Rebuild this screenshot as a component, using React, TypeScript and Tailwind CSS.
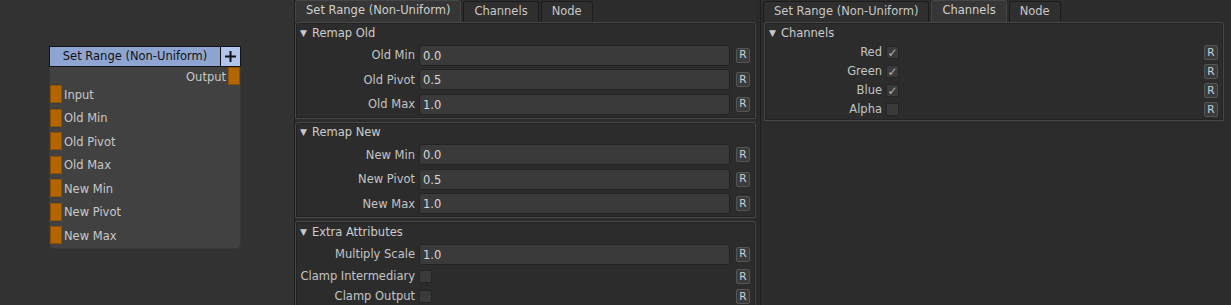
import React from 'react'

const font = "font-['DejaVu_Sans',_Verdana,_sans-serif]"

const Port = () => (
  <div className="w-[12px] h-[18px] bg-[#b36500] border border-[#8c4f05] shrink-0" />
)

const NodeCard = () => {
  const inputs = ['Input', 'Old Min', 'Old Pivot', 'Old Max', 'New Min', 'New Pivot', 'New Max']
  return (
    <div className="w-[192px]">
      {/* header */}
      <div className="flex h-[21px] border border-[#141414]">
        <div className="flex-1 bg-[#8fa5d1] text-[#111] text-[11.5px] flex items-center justify-center border-r border-[#141414] pt-[1px]">
          Set Range (Non-Uniform)
        </div>
        <div className="w-[19px] bg-[#b2c5ec] flex items-center justify-center">
          <svg width="13" height="13" viewBox="0 0 13 13">
            <path d="M6.5 1v11M1 6.5h11" stroke="#111" strokeWidth="2" />
          </svg>
        </div>
      </div>
      {/* body */}
      <div className="bg-[#414141] rounded-b-[5px] pb-[4px] border-b border-x border-[#383838]">
        <div className="flex items-center justify-end h-[18px] gap-[2px] text-[11.5px] text-[#c8c8c8]">
          <span className="pt-[3px]">Output</span>
          <Port />
        </div>
        {inputs.map((label, i) => (
          <div key={label} className={`flex items-center gap-[2px] h-[18px] ${i === 0 ? '' : 'mt-[5.5px]'}`}>
            <Port />
            <span className="text-[11.5px] text-[#c8c8c8] pt-[3px]">{label}</span>
          </div>
        ))}
      </div>
    </div>
  )
}

const Tab = ({ label, active }: { label: string; active?: boolean }) => (
  <div
    className={`px-[10px] flex items-center text-[11.5px] rounded-t-[3px] border border-b-0 ${
      active
        ? 'h-[22px] bg-[#363636] border-[#454545] text-[#d0d0d0] pb-[2px]'
        : 'h-[21px] bg-[#2f2f2f] border-[#1c1c1c] text-[#c8c8c8] mt-[1px]'
    }`}
  >
    {label}
  </div>
)

const RButton = () => (
  <div className="w-[14px] h-[15px] rounded-[2px] bg-[#3b3b3b] border border-[#555] flex items-center justify-center text-[10.5px] text-[#c9d2dc] shrink-0">
    R
  </div>
)

const Group = ({ title, children, className = '' }: { title: string; children: React.ReactNode; className?: string }) => (
  <div className={`border border-[#474747] rounded-t-[3px] shadow-[inset_0_0_0_1px_#232323] ${className}`}>
    <div className="h-[20px] flex items-center gap-[5px] pl-[4px] pt-[1px] text-[11.5px] text-[#cccccc]">
      <span className="text-[9px] text-[#c8c8c8]">▼</span>
      <span>{title}</span>
    </div>
    {children}
  </div>
)

const FieldRow = ({ label, value }: { label: string; value: string }) => (
  <div className="flex items-center h-[24.5px] pr-[5px]">
    <div className="w-[123px] text-right text-[11.5px] text-[#c4c4c4] pr-[4px] pt-[1px] shrink-0">{label}</div>
    <div className="flex-1 h-[21px] bg-[#3a3a3a] border border-[#232323] rounded-[3px] flex items-center pl-[3px] pt-[2px] text-[11.5px] text-[#d8d8d8]">
      {value}
    </div>
    <div className="ml-[6px]">
      <RButton />
    </div>
  </div>
)

const Check = ({ checked }: { checked?: boolean }) => (
  <div className="w-[13px] h-[13px] bg-[#3a3a3a] border border-[#252525] flex items-center justify-center text-[12px] font-bold leading-none text-[#b0b0b0] shrink-0">
    {checked ? '✓' : ''}
  </div>
)

const CheckRow = ({ label, checked, labelW, h }: { label: string; checked?: boolean; labelW: string; h: string }) => (
  <div className={`flex items-center pr-[5px] ${h}`}>
    <div className={`${labelW} text-right text-[11.5px] text-[#c4c4c4] pr-[4px] pt-[1px] shrink-0`}>{label}</div>
    <Check checked={checked} />
    <div className="flex-1" />
    <RButton />
  </div>
)

export default function App() {
  return (
    <div className={`flex w-[1231px] h-[305px] overflow-hidden bg-[#2c2c2c] ${font}`}>
      {/* node graph canvas */}
      <div className="w-[295px] shrink-0 bg-[#323232] border-r border-[#1e1e1e] pt-[46px] pl-[49px]">
        <NodeCard />
      </div>

      {/* attribute editor: set range tab */}
      <div className="w-[461px] shrink-0 flex flex-col">
        <div className="flex h-[22px] gap-[2px]">
          <Tab label="Set Range (Non-Uniform)" active />
          <Tab label="Channels" />
          <Tab label="Node" />
        </div>
        <Group title="Remap Old" className="pb-[1px]">
          <FieldRow label="Old Min" value="0.0" />
          <FieldRow label="Old Pivot" value="0.5" />
          <FieldRow label="Old Max" value="1.0" />
        </Group>
        <Group title="Remap New" className="mt-[3px] pb-[1px]">
          <FieldRow label="New Min" value="0.0" />
          <FieldRow label="New Pivot" value="0.5" />
          <FieldRow label="New Max" value="1.0" />
        </Group>
        <Group title="Extra Attributes" className="mt-[3px] pb-[2px]">
          <FieldRow label="Multiply Scale" value="1.0" />
          <CheckRow label="Clamp Intermediary" labelW="w-[123px]" h="h-[20px]" />
          <CheckRow label="Clamp Output" labelW="w-[123px]" h="h-[20px]" />
        </Group>
      </div>

      {/* splitter */}
      <div className="w-[5px] shrink-0 bg-[#2a2a2a] border-r border-[#1e1e1e]" />

      {/* attribute editor: channels tab */}
      <div className="flex-1 flex flex-col pl-[2px] pr-[7px]">
        <div className="flex h-[22px] gap-[2px]">
          <Tab label="Set Range (Non-Uniform)" />
          <Tab label="Channels" active />
          <Tab label="Node" />
        </div>
        <Group title="Channels" className="pb-[1px] ml-[1px]">
          <CheckRow label="Red" checked labelW="w-[121px]" h="h-[19px]" />
          <CheckRow label="Green" checked labelW="w-[121px]" h="h-[19px]" />
          <CheckRow label="Blue" checked labelW="w-[121px]" h="h-[19px]" />
          <CheckRow label="Alpha" labelW="w-[121px]" h="h-[19px]" />
        </Group>
      </div>
    </div>
  )
}
